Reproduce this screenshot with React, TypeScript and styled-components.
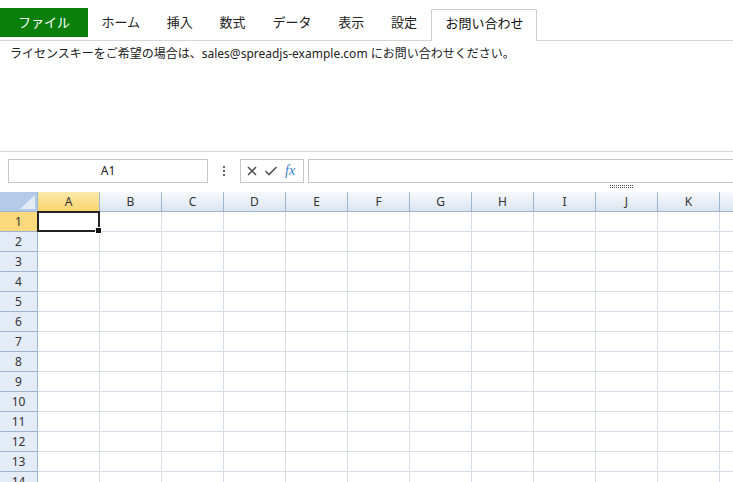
import React from 'react'
import styled, { createGlobalStyle } from 'styled-components'

const Global = createGlobalStyle`
html, body {
  margin: 0;
  padding: 0;
  background: #fff;
}
body {
  font-family: "Noto Sans", "Noto Sans CJK JP", sans-serif;
  color: #222;
}
`

const tabs = ['ホーム', '挿入', '数式', 'データ', '表示', '設定']
const columns = ['A', 'B', 'C', 'D', 'E', 'F', 'G', 'H', 'I', 'J', 'K', 'L']
const rows = Array.from({ length: 14 }, (_, i) => i + 1)

const App = () => {
  return (
    <Page>
      <Global />
      <TabBar>
        <FileTab>ファイル</FileTab>
        {tabs.map(t => (
          <Tab key={t}>{t}</Tab>
        ))}
        <ActiveTab>お問い合わせ</ActiveTab>
      </TabBar>
      <RibbonPanel>
        <Notice>
          ライセンスキーをご希望の場合は、sales@spreadjs-example.com にお問い合わせください。
        </Notice>
      </RibbonPanel>

      <FormulaBar>
        <NameBox>A1</NameBox>
        <Dots>
          <i />
          <i />
          <i />
        </Dots>
        <FxBox>
          <svg width="12" height="12" viewBox="0 0 12 12">
            <path d="M2 2 L10 10 M10 2 L2 10" stroke="#555" strokeWidth="1.6" fill="none" />
          </svg>
          <svg width="14" height="12" viewBox="0 0 14 12">
            <path d="M1.5 6 L5 9.5 L12.5 2" stroke="#555" strokeWidth="1.6" fill="none" />
          </svg>
          <Fx>fx</Fx>
        </FxBox>
        <FormulaInput />
        <Splitter />
      </FormulaBar>

      <Sheet>
        <HeaderRow>
          <Corner />
          {columns.map((c, i) => (
            <ColHeader key={c} selected={i === 0}>
              {c}
            </ColHeader>
          ))}
        </HeaderRow>
        {rows.map(r => (
          <Row key={r}>
            <RowHeader selected={r === 1}>{r}</RowHeader>
            {columns.map((c, i) => (
              <Cell key={c}>
                {r === 1 && i === 0 && (
                  <Selection>
                    <Handle />
                  </Selection>
                )}
              </Cell>
            ))}
          </Row>
        ))}
      </Sheet>
    </Page>
  )
}

export default App

const Page = styled.div`
width: 733px;
height: 482px;
overflow: hidden;
`

const TabBar = styled.div`
box-sizing: border-box;
height: 41px;
padding-top: 8px;
display: flex;
align-items: flex-start;
border-bottom: 1px solid #d5d5d5;
font-size: 13px;
`

const Tab = styled.div`
height: 29px;
line-height: 29px;
padding: 0 13.4px;
color: #222;
flex-shrink: 0;
`

const FileTab = styled(Tab)`
box-sizing: border-box;
width: 88px;
padding: 0;
text-align: center;
background: #0a800a;
color: #fff;
`

const ActiveTab = styled.div`
box-sizing: border-box;
flex-shrink: 0;
margin-top: 1px;
margin-left: 1px;
height: 32px;
line-height: 26px;
padding: 0 13px;
background: #fff;
border: 1px solid #d0d0d0;
border-bottom: none;
color: #111;
`

const RibbonPanel = styled.div`
box-sizing: border-box;
height: 111px;
padding: 4px 10px;
border-bottom: 1px solid #d8d8d8;
`

const Notice = styled.div`
font-size: 12px;
line-height: 18px;
color: #222;
`

const FormulaBar = styled.div`
position: relative;
box-sizing: border-box;
height: 40px;
padding: 7px 0 0 8px;
display: flex;
align-items: flex-start;
`

const NameBox = styled.div`
box-sizing: border-box;
flex-shrink: 0;
width: 200px;
height: 24px;
border: 1px solid #c8c8c8;
text-align: center;
font-size: 12px;
line-height: 22px;
color: #222;
`

const Dots = styled.div`
flex-shrink: 0;
width: 32px;
height: 24px;
display: flex;
flex-direction: column;
align-items: center;
justify-content: center;
gap: 2px;
i {
  display: block;
  width: 2px;
  height: 2px;
  background: #666;
}
`

const FxBox = styled.div`
box-sizing: border-box;
flex-shrink: 0;
width: 64px;
height: 24px;
border: 1px solid #c8c8c8;
display: flex;
align-items: center;
gap: 6px;
padding-left: 5px;
`

const Fx = styled.span`
font-family: "Liberation Serif", "DejaVu Serif", serif;
font-style: italic;
font-size: 14px;
color: #3a7fd0;
margin-left: 1px;
`

const FormulaInput = styled.div`
box-sizing: border-box;
flex-shrink: 0;
margin-left: 4px;
width: 500px;
height: 24px;
border: 1px solid #c8c8c8;
`

const Splitter = styled.div`
position: absolute;
left: 610px;
top: 33px;
width: 23px;
height: 1px;
border-top: 1px dotted #444;
border-bottom: 1px dotted #444;
`

const Sheet = styled.div`
display: flex;
flex-direction: column;
`

const HeaderRow = styled.div`
display: flex;
height: 20px;
`

const Row = styled.div`
display: flex;
height: 20px;
`

const Corner = styled.div`
position: relative;
box-sizing: border-box;
flex: 0 0 38px;
height: 20px;
background: #b3cbe8;
border-right: 1px solid #9db5cf;
border-bottom: 1px solid #9db5cf;
&::after {
  content: "";
  position: absolute;
  right: 2px;
  bottom: 2px;
  width: 0;
  height: 0;
  border-left: 15px solid transparent;
  border-bottom: 14px solid #e3ebf5;
}
`

const ColHeader = styled.div<{ selected?: boolean }>`
box-sizing: border-box;
flex: 0 0 62px;
height: 20px;
border-right: 1px solid #9db5cf;
border-bottom: 1px solid #9db5cf;
background: ${p =>
  p.selected
    ? 'linear-gradient(#fde9a9, #f9d56f)'
    : 'linear-gradient(#f7f9fc, #dbe5f0)'};
text-align: center;
font-size: 12px;
line-height: 19px;
color: #333;
`

const RowHeader = styled.div<{ selected?: boolean }>`
box-sizing: border-box;
flex: 0 0 38px;
height: 20px;
border-right: 1px solid #9db5cf;
border-bottom: 1px solid #9db5cf;
background: ${p => (p.selected ? '#fbd97c' : '#e4ecf7')};
text-align: center;
font-size: 12px;
line-height: 19px;
color: #333;
`

const Cell = styled.div`
position: relative;
box-sizing: border-box;
flex: 0 0 62px;
height: 20px;
border-right: 1px solid #d6dde8;
border-bottom: 1px solid #d6dde8;
`

const Selection = styled.div`
position: absolute;
left: -1px;
top: -1px;
width: 63px;
height: 21px;
box-sizing: border-box;
border: 2px solid #222;
z-index: 2;
`

const Handle = styled.div`
position: absolute;
right: -4px;
bottom: -4px;
width: 5px;
height: 5px;
background: #111;
border: 1px solid #fff;
`
